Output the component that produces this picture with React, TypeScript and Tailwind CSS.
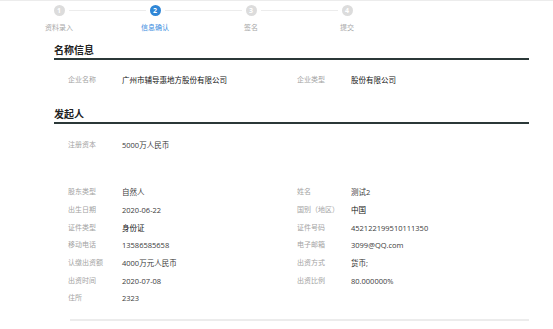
import React from 'react'

const font = { fontFamily: '"Open Sans", "Noto Sans CJK SC", sans-serif' }

const steps = ['资料录入', '信息确认', '签名', '提交']
const active = 1

type Field = { label: string; value: string; strong?: boolean }

const leftFields: Field[] = [
  { label: '股东类型', value: '自然人' },
  { label: '出生日期', value: '2020-06-22' },
  { label: '证件类型', value: '身份证', strong: true },
  { label: '移动电话', value: '13586585658' },
  { label: '认缴出资额', value: '4000万元人民币' },
  { label: '出资时间', value: '2020-07-08' },
  { label: '住所', value: '2323' },
]

const rightFields: Field[] = [
  { label: '姓名', value: '测试2' },
  { label: '国别（地区）', value: '中国', strong: true },
  { label: '证件号码', value: '452122199510111350' },
  { label: '电子邮箱', value: '3099@QQ.com' },
  { label: '出资方式', value: '货币;' },
  { label: '出资比例', value: '80.000000%' },
]

const Row: React.FC<{ field?: Field }> = ({ field }) => (
  <div className="flex h-[17.7px] items-center">
    {field && (
      <>
        <span className="w-[54px] shrink-0 text-[7px] leading-[10px] text-[#a3a3a3]">{field.label}</span>
        <span className={`text-[7.5px] leading-[10px] ${field.strong ? 'text-[#111]' : 'text-[#3a3a3a]'}`}>
          {field.value}
        </span>
      </>
    )}
  </div>
)

const Heading: React.FC<{ title: string }> = ({ title }) => (
  <div className="ml-[54px] w-[475px] border-b-2 border-[#2b3838]">
    <h2 className="h-[15px] text-[10px] font-semibold leading-[14px] text-[#222]">{title}</h2>
  </div>
)

const App: React.FC = () => {
  return (
    <div className="h-[329px] w-[553px] overflow-hidden border-t border-[#ececec] bg-white" style={font}>
      {/* stepper */}
      <div className="flex pl-[11px] pt-[4px]">
        {steps.map((s, i) => (
          <div key={s} className="flex w-[96px] flex-col items-center">
            <div className="flex w-full items-center">
              <div className={`mr-[4px] h-px flex-1 ${i > 0 ? 'bg-[#ececec]' : 'bg-transparent'}`} />
              <div
                className={`flex h-[11px] w-[11px] items-center justify-center rounded-full text-[7px] font-bold leading-none text-white ${
                  i === active ? 'bg-[#2f86d6]' : 'bg-[#dcdcdc]'
                }`}
              >
                {i + 1}
              </div>
              <div className={`ml-[4px] h-px flex-1 ${i < steps.length - 1 ? 'bg-[#ececec]' : 'bg-transparent'}`} />
            </div>
            <span
              className={`mt-[7px] text-[7px] leading-[10px] ${i === active ? 'text-[#3b8de0]' : 'text-[#a8a8a8]'}`}
            >
              {s}
            </span>
          </div>
        ))}
      </div>

      {/* 名称信息 */}
      <div className="mt-[10px]">
        <Heading title="名称信息" />
      </div>
      <div className="ml-[68px] mt-[11px] grid grid-cols-[229px_229px]">
        <Row field={{ label: '企业名称', value: '广州市辅导惠地方股份有限公司', strong: true }} />
        <Row field={{ label: '企业类型', value: '股份有限公司', strong: true }} />
      </div>

      {/* 发起人 */}
      <div className="mt-[18px]">
        <Heading title="发起人" />
      </div>
      <div className="ml-[68px] mt-[12px]">
        <Row field={{ label: '注册资本', value: '5000万人民币' }} />
      </div>

      <div className="ml-[68px] mt-[30px] grid grid-cols-[229px_229px]">
        <div className="flex flex-col">
          {leftFields.map((f) => (
            <Row key={f.label} field={f} />
          ))}
        </div>
        <div className="flex flex-col">
          {rightFields.map((f) => (
            <Row key={f.label} field={f} />
          ))}
        </div>
      </div>

      <div className="ml-[70px] mt-[12px] h-[2px] w-[459px] bg-[#ececec]" />
    </div>
  )
}

export default App
